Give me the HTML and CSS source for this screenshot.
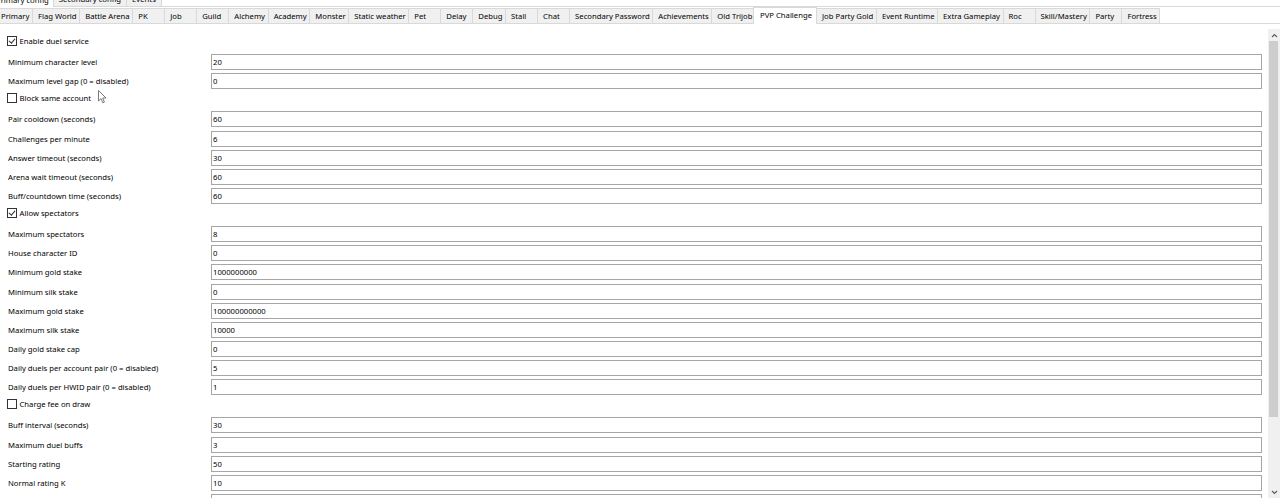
FILE: index.html
```html
<!DOCTYPE html>
<html lang="en">
<head>
  <meta charset="UTF-8">
  <title>Server Settings</title>
  <link rel="stylesheet" href="styles.css">
</head>
<body>

  <div class="window">
    <!-- top level config tabs -->
    <div class="tabs outer-tabs">
      <div class="tab active">Primary config</div>
      <div class="tab">Secondary config</div>
      <div class="tab">Events</div>
    </div>

    <div class="outer-page">
      <div class="tabs inner-tabs">
        <div class="tab">Primary</div>
        <div class="tab">Flag World</div>
        <div class="tab">Battle Arena</div>
        <div class="tab">PK</div>
        <div class="tab">Job</div>
        <div class="tab">Guild</div>
        <div class="tab">Alchemy</div>
        <div class="tab">Academy</div>
        <div class="tab">Monster</div>
        <div class="tab">Static weather</div>
        <div class="tab">Pet</div>
        <div class="tab">Delay</div>
        <div class="tab">Debug</div>
        <div class="tab">Stall</div>
        <div class="tab">Chat</div>
        <div class="tab">Secondary Password</div>
        <div class="tab">Achievements</div>
        <div class="tab">Old Trijob</div>
        <div class="tab active">PVP Challenge</div>
        <div class="tab">Job Party Gold</div>
        <div class="tab">Event Runtime</div>
        <div class="tab">Extra Gameplay</div>
        <div class="tab">Roc</div>
        <div class="tab">Skill/Mastery</div>
        <div class="tab">Party</div>
        <div class="tab">Fortress</div>
      </div>

      <div class="panel">
        <div class="form" id="pvpForm"></div>

        <div class="scrollbar">
          <div class="arrow">
            <svg width="7" height="5" viewBox="0 0 7 5"><polyline points="1,4 3.5,1.5 6,4" fill="none" stroke="#606060" stroke-width="1.2"/></svg>
          </div>
          <div class="track"><div class="thumb"></div></div>
          <div class="arrow">
            <svg width="7" height="5" viewBox="0 0 7 5"><polyline points="1,1 3.5,3.5 6,1" fill="none" stroke="#606060" stroke-width="1.2"/></svg>
          </div>
        </div>
      </div>
    </div>
  </div>

  <!-- mouse pointer -->
  <svg class="pointer" width="11" height="14" viewBox="0 0 11 14">
    <path d="M0.5 0.5 L0.5 11 L3 8.6 L4.8 12.8 L6.4 12.1 L4.7 8 L8 8 Z" fill="#fff" stroke="#6b6b6b" stroke-width="0.9" stroke-linejoin="round"/>
  </svg>

  <script>
  // PVP challenge settings (type "check" = checkbox row)
  const settings = [
    { type: "check", label: "Enable duel service", value: true },
    { label: "Minimum character level", value: "20" },
    { label: "Maximum level gap (0 = disabled)", value: "0" },
    { type: "check", label: "Block same account", value: false },
    { label: "Pair cooldown (seconds)", value: "60" },
    { label: "Challenges per minute", value: "6" },
    { label: "Answer timeout (seconds)", value: "30" },
    { label: "Arena wait timeout (seconds)", value: "60" },
    { label: "Buff/countdown time (seconds)", value: "60" },
    { type: "check", label: "Allow spectators", value: true },
    { label: "Maximum spectators", value: "8" },
    { label: "House character ID", value: "0" },
    { label: "Minimum gold stake", value: "1000000000" },
    { label: "Minimum silk stake", value: "0" },
    { label: "Maximum gold stake", value: "100000000000" },
    { label: "Maximum silk stake", value: "10000" },
    { label: "Daily gold stake cap", value: "0" },
    { label: "Daily duels per account pair (0 = disabled)", value: "5" },
    { label: "Daily duels per HWID pair (0 = disabled)", value: "1" },
    { type: "check", label: "Charge fee on draw", value: false },
    { label: "Buff interval (seconds)", value: "30" },
    { label: "Maximum duel buffs", value: "3" },
    { label: "Starting rating", value: "50" },
    { label: "Normal rating K", value: "10" },
    { label: "", value: "" }
  ];

  const form = document.getElementById("pvpForm");

  settings.forEach(s => {
    const row = document.createElement("div");
    if (s.type === "check") {
      row.className = "row check-row";
      row.innerHTML = `
        <label class="check">
          <input type="checkbox" ${s.value ? "checked" : ""}>
          <span class="box"></span>
          <span>${s.label}</span>
        </label>
      `;
    } else {
      row.className = "row";
      row.innerHTML = `
        <span class="label">${s.label}</span>
        <input type="text" class="field" value="${s.value}">
      `;
    }
    form.appendChild(row);
  });
  </script>

</body>
</html>
```

FILE: styles.css
```css
html, body {
  margin: 0;
  height: 100%;
  overflow: hidden;
  background: #fff;
}

body {
  font-family: "Noto Sans", "Open Sans", sans-serif;
  font-size: 7.7px;
  color: #000;
}

.window {
  width: calc(100% + 5px);
  margin: -12px 0 0 -5px;
}

/* tab strips */
.tabs {
  display: flex;
  align-items: flex-end;
  border-bottom: 1px solid #d9d9d9;
  background: #fff;
}

.tab {
  height: 14px;
  line-height: 14px;
  min-width: 33px;
  padding: 0 2.6px 0 5px;
  box-sizing: border-box;
  background: #f0f0f0;
  border: 1px solid #d9d9d9;
  border-bottom: none;
  margin-right: -1px;
  white-space: nowrap;
}

.tab.active {
  position: relative;
  z-index: 1;
  height: 17px;
  line-height: 15px;
  background: #fff;
  margin: 0 -1px -1px -2px;
  padding: 0 4px 0 6px;
}

.outer-tabs {
  height: 18px;
}

.outer-tabs .tab {
  height: 16px;
  line-height: 16px;
  padding: 0 5px;
}

.outer-tabs .tab.active {
  height: 19px;
  line-height: 22px;
  margin-left: -4px;
  padding: 0 4px 0 4px;
}

.inner-tabs {
  height: 16px;
}

.inner-tabs .tab {
  height: 15px;
}

.inner-tabs .tab.active {
  height: 17px;
}

/* scrollable settings panel */
.panel {
  display: flex;
  height: 469px;
  margin-top: 5px;
}

.form {
  flex: 1;
  padding: 4.4px 6px 0 13px;
  overflow: hidden;
}

.row {
  display: grid;
  grid-template-columns: 203px 1fr;
  align-items: center;
  height: 19.13px;
}

.check-row {
  display: flex;
  padding-bottom: 4px;
  box-sizing: border-box;
}

.label {
  white-space: nowrap;
}

.field {
  height: 16px;
  box-sizing: border-box;
  margin: 0;
  padding: 0 0 0 1px;
  border: 1px solid #a6a6a6;
  font-family: inherit;
  font-size: 7.7px;
  color: #000;
  background: #fff;
  outline: none;
}

/* checkbox */
.check {
  display: flex;
  align-items: center;
  gap: 3px;
  margin-left: -1.5px;
}

.check input {
  display: none;
}

.check .box {
  position: relative;
  width: 10px;
  height: 10px;
  box-sizing: border-box;
  border: 1px solid #333;
  background: #fff;
}

.check input:checked + .box::after {
  content: "";
  position: absolute;
  left: 2.4px;
  top: 0.2px;
  width: 2.5px;
  height: 5px;
  border: solid #333;
  border-width: 0 1px 1px 0;
  transform: rotate(40deg);
}

/* scrollbar */
.scrollbar {
  width: 12px;
  display: flex;
  flex-direction: column;
  background: #f0f0f0;
}

.arrow {
  height: 12px;
  display: flex;
  align-items: center;
  justify-content: center;
}

.track {
  flex: 1;
}

.thumb {
  height: 376px;
  margin: 0 2px 0 1px;
  background: #cdcdcd;
}

.pointer {
  position: absolute;
  left: 98px;
  top: 90px;
}
```
